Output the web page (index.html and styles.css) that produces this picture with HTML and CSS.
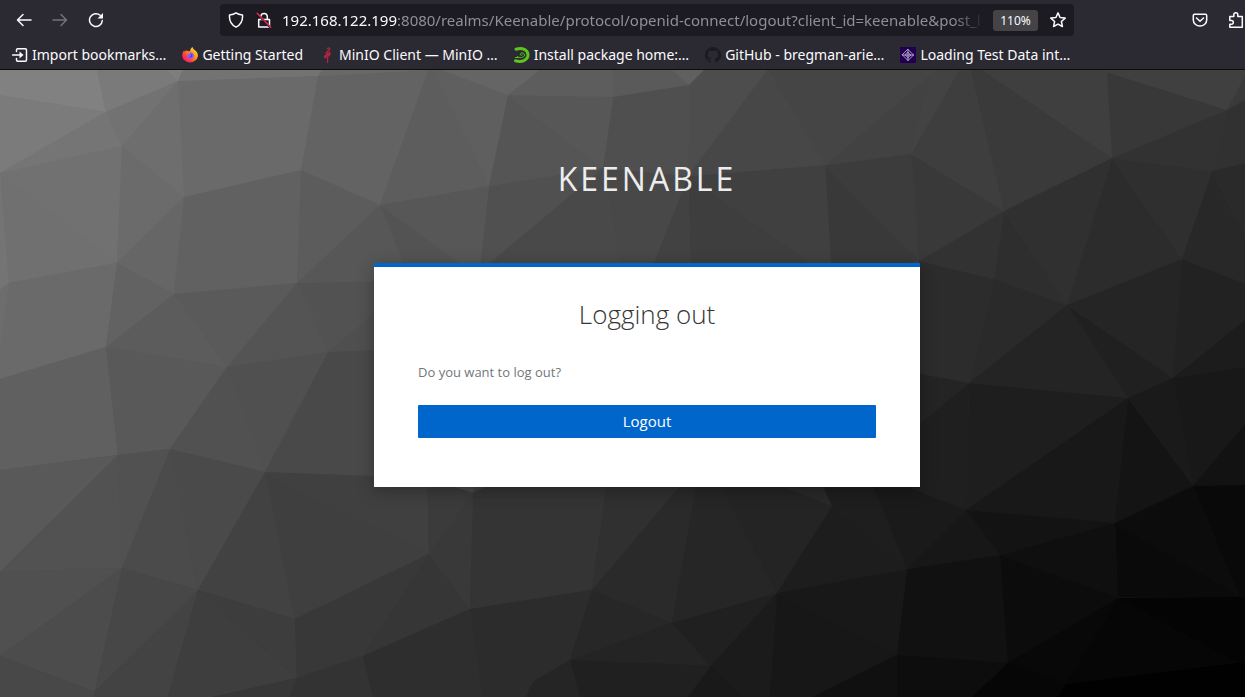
FILE: index.html
```html
<!DOCTYPE html>
<html lang="en">
<head>
<meta charset="utf-8">
<meta name="viewport" content="width=device-width, initial-scale=1">
<title>Logging out</title>
<link rel="stylesheet" href="styles.css">
</head>
<body class="window">
<header class="chrome">
  <div class="toolbar">
    <nav class="history" aria-label="History">
      <button class="icon-button" type="button" aria-label="Back"><svg class="icon" viewBox="0 0 16 16"><path d="M15 8H1.500M7 2.500L1.500 8 7 13.500"/></svg></button>
      <button class="icon-button" type="button" aria-label="Forward" disabled><svg class="icon" viewBox="0 0 16 16"><path d="M1 8h13.500M9 2.500L14.500 8 9 13.500"/></svg></button>
      <button class="icon-button" type="button" aria-label="Reload"><svg class="icon" viewBox="0 0 16 16"><path d="M14.300 8.500A6.400 6.400 0 1 1 12.200 3.300"/><path class="solid" d="M15 1v5.500H9.500z"/></svg></button>
    </nav>
    <div class="address">
      <button class="address-button" type="button" aria-label="Tracking protection"><svg class="icon" viewBox="0 0 16 16"><path d="M8 .8C9.800 2 12 2.600 14.500 3c.4 5-1.700 9.700-6.500 12.200C3.200 12.700 1.100 8 1.500 3 4 2.600 6.200 2 8 .8z"/></svg></button>
      <button class="address-button" type="button" aria-label="Connection not secure"><svg class="icon" viewBox="0 0 16 16"><path d="M4.800 7V4.200a3.300 3.300 0 0 1 6.500 0V7M2.700 7.500h10.800v7.500H2.700z"/><path class="gap" d="M.8 1.500l13.500 14"/><path class="slash" d="M1.200 1.200l13.500 14"/></svg></button>
      <div class="url" role="textbox" aria-label="Address" tabindex="0"><span class="host">192.168.122.199</span>:8080/realms/Keenable/protocol/openid-connect/logout?client_id=keenable&amp;post_l</div>
      <button class="zoom" type="button">110%</button>
      <button class="address-button" type="button" aria-label="Bookmark this page"><svg class="icon" viewBox="0 0 16 16"><path d="M8 .9l2.100 4.600 5.100.6-3.800 3.400 1 5L8 12.100l-4.400 2.400 1-5L.8 6.100l5.100-.6z"/></svg></button>
    </div>
    <div class="tools">
      <button class="icon-button" type="button" aria-label="Save to Pocket"><svg class="icon" viewBox="0 0 16 16"><path d="M2.500 2.300h11c.7 0 1.200.5 1.200 1.200V8A6.700 6 0 0 1 1.300 8V3.500c0-.7.500-1.200 1.200-1.200zM4.500 6L8 9.300 11.500 6"/></svg></button>
      <button class="icon-button" type="button" aria-label="Extensions"><svg class="icon" viewBox="0 0 16 16"><path d="M1.800 7V4.500h4V2.800a2 2 0 0 1 4 0v1.700h4.500v10.700H1.800v-3h1.700a1.800 1.800 0 0 0 0-3.600H1.800z"/></svg></button>
    </div>
  </div>
  <nav class="bookmarks" aria-label="Bookmarks">
    <a class="bookmark" href="#"><svg class="icon" viewBox="0 0 16 16"><path d="M4.500 4.500V3c0-.7.500-1.200 1.200-1.200h7.600c.7 0 1.200.5 1.200 1.200v10c0 .7-.5 1.200-1.200 1.200H5.700c-.7 0-1.200-.5-1.200-1.200v-1.500M.5 8h8"/><path class="solid" d="M7.500 4.500L11.500 8l-4 3.500z"/></svg><span class="label">Import bookmarks…</span></a>
    <a class="bookmark" href="#"><svg class="icon art" viewBox="0 0 16 16"><defs><linearGradient id="flame" x1="1" y1="0" x2="0" y2="1"><stop offset="0" stop-color="#fff44f"/><stop offset=".4" stop-color="#ff980e"/><stop offset=".7" stop-color="#ff3647"/><stop offset="1" stop-color="#e31587"/></linearGradient></defs><path fill="url(#flame)" d="M10.500 0c.3 1.600 1.600 2.300 2.800 3.500C14.800 4.800 16 6.500 15.900 9A7.900 7.300 0 0 1 .2 9C0 6.700 1 4.700 2.300 3.200l.4 1.700c.8-.9 1.500-1.200 2.200-1.300C5.600 4.300 7 4.300 8 4.200 8.300 2.300 9 .8 10.500 0z"/><path fill="#9059ff" d="M8.300 5.200c2.300 0 3.800 1.700 3.700 3.700A3.900 3.800 0 0 1 4.500 9.500c.8.900 2.300.5 3.300-.3H6.300c-1-.2-1.400-1-.8-1.800.8-.3 1.900-.7 2.800-2.200z"/><path fill="#5b35cf" d="M8.500 6.500c1.700.2 2.300 1.800 1.500 3-.9 1.200-2.500 1.200-3.500.6 2-.2 3.400-1.700 2-3.600z"/></svg><span class="label">Getting Started</span></a>
    <a class="bookmark" href="#"><svg class="icon art" viewBox="0 0 16 16"><path fill="none" stroke="#b3233e" stroke-width="1.300" d="M8.500 1.500c1.300-1.200 2.800.3 1.800 1.500L7.500 5.600c-.8 1 .3 1.800 1.200 1.500L8.500 15.500M11 5.500c.3 2-1 3.500-2.300 3.500L6 10.700"/><path fill="#b3233e" d="M5 9l3.800-3.500 2-.5c.4 2-.8 3.600-2.300 4L4.800 11z"/></svg><span class="label">MinIO Client — MinIO …</span></a>
    <a class="bookmark" href="#"><svg class="icon art" viewBox="0 0 16 16"><path fill="none" stroke="#5dc51b" stroke-width="3" d="M2 2.200c6.500-1.900 11.800.5 12 5.500.1 5.700-6.500 7.800-12.500 6.100"/><path fill="none" stroke="#5dc51b" stroke-width="1" d="M3.500 9.700c1.700 1.500 7 1.200 7-1.700 0-2.500-3.500-2.700-4.100-1-.4 1.400 1.500 1.900 2.100.9M1.500 10.500h2.700"/></svg><span class="label">Install package home:…</span></a>
    <a class="bookmark" href="#"><svg class="icon art" viewBox="0 0 16 16"><path fill="#1b1b1f" d="M8 0a8 8 0 0 0-2.500 15.600c.4.100.5-.2.500-.4V13.700c-2.200.5-2.700-1-2.700-1-.4-.9-.9-1.200-.9-1.200-.7-.5.100-.5.100-.5.800.1 1.200.8 1.200.8.700 1.300 1.900.9 2.300.7.100-.5.300-.9.500-1.100-1.800-.2-3.600-.9-3.600-4 0-.9.300-1.600.8-2.100-.1-.2-.4-1 .1-2.100 0 0 .7-.2 2.200.8a7.600 7.600 0 0 1 4 0c1.500-1 2.200-.8 2.200-.8.4 1.100.2 1.900.1 2.100.5.600.8 1.300.8 2.100 0 3.100-1.900 3.800-3.700 4 .3.200.6.700.6 1.500v2.300c0 .2.100.5.500.4A8 8 0 0 0 8 0z"/></svg><span class="label">GitHub - bregman-arie…</span></a>
    <a class="bookmark" href="#"><svg class="icon art" viewBox="0 0 16 16"><path fill="#210050" d="M0 0h16v16H0z"/><path fill="none" stroke="#d6c8f2" stroke-width=".8" d="M8 2.500L13.500 8 8 13.500 2.500 8zM8 2.500v11M2.500 8h11M8 5.300L10.700 8 8 10.700 5.300 8z"/></svg><span class="label">Loading Test Data int…</span></a>
  </nav>
</header>
<main class="page">
  <svg class="backdrop" viewBox="0 70 1245 627" preserveAspectRatio="xMinYMin slice" aria-hidden="true">
    <defs><linearGradient id="shade" x1="0" y1="0" x2="1" y2="1"><stop offset="0" stop-color="#828282"/><stop offset=".5" stop-color="#434343"/><stop offset="1" stop-color="#010101"/></linearGradient></defs>
    <path fill="url(#shade)" d="M0 70h1245v627H0z"/>
    <path fill="#818181" d="M0 70H97L106 112 0 95z"/>
    <path fill="#7a7a7a" d="M97 70H166L178 81 106 112z"/>
    <path fill="#7e7e7e" d="M166 70H183L178 81z"/>
    <path fill="#7b7b7b" d="M0 95L106 112 0 173z"/>
    <path fill="#737373" d="M183 70H322L318 76 178 81z"/>
    <path fill="#757575" d="M0 173L106 112 122 146z"/>
    <path fill="#727272" d="M106 112L178 81 122 146z"/>
    <path fill="#6e6e6e" d="M178 81L184 197 122 146z"/>
    <path fill="#6a6a6a" d="M178 81L318 76 301 170 184 197z"/>
    <path fill="#696969" d="M322 70H428L318 76z"/>
    <path fill="#636363" d="M318 76L428 70 380 205 301 170z"/>
    <path fill="#717171" d="M0 173L122 146 117 263z"/>
    <path fill="#707070" d="M0 173L117 263 9 283z"/>
    <path fill="#747474" d="M0 173L9 283 0 290z"/>
    <path fill="#6b6b6b" d="M122 146L184 197 117 263z"/>
    <path fill="#666666" d="M184 197L174 294 117 263z"/>
    <path fill="#616161" d="M184 197L301 170 297 283 174 294z"/>
    <path fill="#5c5c5c" d="M301 170L380 205 297 283z"/>
    <path fill="#6a6a6a" d="M9 283L117 263 106 347 0 379V345z"/>
    <path fill="#6d6d6d" d="M0 290L9 283 0 348z"/>
    <path fill="#626262" d="M117 263L174 294 106 347z"/>
    <path fill="#5c5c5c" d="M174 294L227 367 106 347z"/>
    <path fill="#5a5a5a" d="M174 294L297 283 227 367z"/>
    <path fill="#545454" d="M297 283L328 352 227 367z"/>
    <path fill="#525252" d="M297 283L479 278 328 352z"/>
    <path fill="#575757" d="M380 205L297 283 410 281z"/>
    <path fill="#4f4f4f" d="M328 352L400 292V350z"/>
    <path fill="#606060" d="M0 379L106 347 118 455 0 470z"/>
    <path fill="#595959" d="M106 347L227 367 170 449 118 455z"/>
    <path fill="#515151" d="M227 367L265 472 170 449z"/>
    <path fill="#505050" d="M227 367L328 352 265 472z"/>
    <path fill="#494949" d="M328 352L500 346 473 493 265 472z"/>
    <path fill="#595959" d="M0 470L118 455 0 572z"/>
    <path fill="#525252" d="M118 455L122 568 0 572z"/>
    <path fill="#515151" d="M118 455L170 449 122 568z"/>
    <path fill="#4b4b4b" d="M170 449L198 590 122 568z"/>
    <path fill="#4a4a4a" d="M170 449L265 472 198 590z"/>
    <path fill="#424242" d="M265 472L295 619 198 590z"/>
    <path fill="#3f3f3f" d="M265 472L429 554 295 619z"/>
    <path fill="#404040" d="M265 472L427 478 429 554z"/>
    <path fill="#505050" d="M0 572L122 568 0 656z"/>
    <path fill="#4c4c4c" d="M122 568L95 692 0 656z"/>
    <path fill="#474747" d="M122 568L198 590 95 692z"/>
    <path fill="#484848" d="M0 656L95 692 93 697H0z"/>
    <path fill="#434343" d="M198 590L168 697H93L95 692z"/>
    <path fill="#3e3e3e" d="M198 590L297 678 212 697H168z"/>
    <path fill="#3d3d3d" d="M198 590L295 619 297 678z"/>
    <path fill="#383838" d="M295 619L429 554 363 656 297 678z"/>
    <path fill="#373737" d="M212 697L297 678 290 697z"/>
    <path fill="#333333" d="M297 678L363 656 373 697H290z"/>
    <path fill="#363636" d="M429 554L470 609 363 656z"/>
    <path fill="#2e2e2e" d="M363 656L470 609 483 697H373z"/>
    <path fill="#3b3b3b" d="M427 478L473 493 429 554z"/>
    <path fill="#393939" d="M473 493L470 609 429 554z"/>
    <path fill="#5d5d5d" d="M428 70L440 70 489 186 380 205z"/>
    <path fill="#5f5f5f" d="M433 70H442L508 95 489 186z"/>
    <path fill="#656565" d="M442 70H540L508 95z"/>
    <path fill="#5d5d5d" d="M540 70H613V97L508 95z"/>
    <path fill="#5a5a5a" d="M613 70H672L689 85 613 97z"/>
    <path fill="#606060" d="M672 70H704L689 85z"/>
    <path fill="#555555" d="M508 95L603 168 489 186z"/>
    <path fill="#575757" d="M508 95L613 97 603 168z"/>
    <path fill="#4f4f4f" d="M613 97L689 85 688 176 603 168z"/>
    <path fill="#4d4d4d" d="M704 70H767L688 176 689 85z"/>
    <path fill="#474747" d="M767 70L825 165 688 176z"/>
    <path fill="#454545" d="M767 70H933V72L825 165z"/>
    <path fill="#535353" d="M380 205L460 263 410 281z"/>
    <path fill="#575757" d="M380 205L489 186 479 278 460 263z"/>
    <path fill="#505050" d="M489 186L603 168 479 278z"/>
    <path fill="#494949" d="M603 168L622 278H472z"/>
    <path fill="#484848" d="M603 168L688 176 648 278H622z"/>
    <path fill="#424242" d="M688 176L691 278H648z"/>
    <path fill="#3e3e3e" d="M688 176L832 278H691z"/>
    <path fill="#404040" d="M688 176L825 165 832 278z"/>
    <path fill="#343434" d="M473 493L500 480 607 480 592 590 470 609z"/>
    <path fill="#303030" d="M607 480H685L592 590z"/>
    <path fill="#2a2a2a" d="M685 480H697L672 623 592 590z"/>
    <path fill="#262626" d="M697 480H717L777 593 672 623z"/>
    <path fill="#2c2c2c" d="M470 609L592 590 570 660 533 682 526 697H483z"/>
    <path fill="#272727" d="M592 590L672 623 570 660z"/>
    <path fill="#242424" d="M672 623L711 666 570 660z"/>
    <path fill="#252525" d="M570 660L580 697H526L533 682z"/>
    <path fill="#202020" d="M570 660L711 666 688 697H580z"/>
    <path fill="#202020" d="M672 623L777 593 711 666z"/>
    <path fill="#191919" d="M711 666L742 697H688z"/>
    <path fill="#1b1b1b" d="M777 593L770 697H742L711 666z"/>
    <path fill="#242424" d="M717 480H765L832 506 777 593z"/>
    <path fill="#292929" d="M765 480H820L832 506z"/>
    <path fill="#1e1e1e" d="M820 480H870L907 569 832 506z"/>
    <path fill="#1d1d1d" d="M832 506L907 569 777 593z"/>
    <path fill="#171717" d="M777 593L897 655 812 697H770z"/>
    <path fill="#181818" d="M777 593L907 569 897 655z"/>
    <path fill="#424242" d="M933 72L911 154 825 165z"/>
    <path fill="#434343" d="M933 70H959L911 154 933 72z"/>
    <path fill="#3e3e3e" d="M959 70H970L1004 211 911 154z"/>
    <path fill="#3a3a3a" d="M970 70H983L1112 158 1004 211z"/>
    <path fill="#3f3f3f" d="M983 70H1107L1112 158z"/>
    <path fill="#383838" d="M1107 72L1227 110 1112 158z"/>
    <path fill="#404040" d="M1107 70H1245V76L1227 110 1107 72z"/>
    <path fill="#3a3a3a" d="M1245 76V100L1227 110z"/>
    <path fill="#313131" d="M1227 110L1245 100V163L1212 171z"/>
    <path fill="#323232" d="M1227 110L1212 171 1112 158z"/>
    <path fill="#3c3c3c" d="M825 165L911 154 919 261z"/>
    <path fill="#393939" d="M825 165L919 261 832 278z"/>
    <path fill="#393939" d="M911 154L1004 211 919 261z"/>
    <path fill="#323232" d="M1004 211L994 279 919 261z"/>
    <path fill="#2e2e2e" d="M1004 211L1067 305 994 279z"/>
    <path fill="#303030" d="M1004 211L1112 158 1067 305z"/>
    <path fill="#2c2c2c" d="M1112 158L1182 259 1067 305z"/>
    <path fill="#2f2f2f" d="M1112 158L1212 171 1182 259z"/>
    <path fill="#282828" d="M1212 171L1245 235V284L1182 259z"/>
    <path fill="#2a2a2a" d="M1212 171L1245 163V235z"/>
    <path fill="#2c2c2c" d="M919 261L994 279 969 383 900 370z"/>
    <path fill="#2a2a2a" d="M994 279L1067 305 969 383z"/>
    <path fill="#242424" d="M1067 305L1128 398 969 383z"/>
    <path fill="#202020" d="M1067 305L1173 378 1128 398z"/>
    <path fill="#252525" d="M1067 305L1182 259 1173 378z"/>
    <path fill="#222222" d="M1182 259L1245 284V320L1173 378z"/>
    <path fill="#1c1c1c" d="M1245 320V367L1173 378z"/>
    <path fill="#181818" d="M1173 378L1245 367V424L1193 486z"/>
    <path fill="#242424" d="M900 370L969 383 900 440z"/>
    <path fill="#1f1f1f" d="M969 383L966 510 890 480 900 440z"/>
    <path fill="#1e1e1e" d="M969 383L1128 398 966 510z"/>
    <path fill="#181818" d="M1128 398L1115 523 966 510z"/>
    <path fill="#141414" d="M1128 398L1193 486 1115 523z"/>
    <path fill="#1a1a1a" d="M1128 398L1173 378 1193 486z"/>
    <path fill="#121212" d="M1245 424V485L1193 486z"/>
    <path fill="#090909" d="M1193 486L1245 485V597H1240z"/>
    <path fill="#0c0c0c" d="M1193 486L1240 597 1115 523z"/>
    <path fill="#0a0a0a" d="M1115 523L1240 597H1118z"/>
    <path fill="#1a1a1a" d="M870 480H890L966 510 907 569z"/>
    <path fill="#171717" d="M966 510L1000 555 907 569z"/>
    <path fill="#131313" d="M966 510L1115 523 1000 555z"/>
    <path fill="#0f0f0f" d="M1115 523L1118 598 1000 555z"/>
    <path fill="#111111" d="M907 569L1000 555 1008 663 897 655z"/>
    <path fill="#0c0c0c" d="M1000 555L1118 598 1008 663z"/>
    <path fill="#080808" d="M1118 598L1066 684 1008 663z"/>
    <path fill="#060606" d="M1118 598L1239 663 1066 684z"/>
    <path fill="#040404" d="M1118 598L1240 597 1245 597V663H1239z"/>
    <path fill="#101010" d="M897 655V697H812z"/>
    <path fill="#0d0d0d" d="M897 655L1008 663 972 697H897z"/>
    <path fill="#060606" d="M1008 663L1066 684 1058 697H972z"/>
    <path fill="#010101" d="M1066 684L1239 663H1245V697H1058z"/>
  </svg>
  <h1 class="realm">KEENABLE</h1>
  <section class="card">
    <h2 class="card-title">Logging out</h2>
    <form class="logout-form">
      <p class="question">Do you want to log out?</p>
      <button class="logout" type="button">Logout</button>
    </form>
  </section>
</main>
</body>
</html>
```
FILE: styles.css
```css
* {
  box-sizing: border-box;
}

.window {
  display: flex;
  flex-direction: column;
  min-height: 100vh;
  margin: 0;
  overflow-x: hidden;
  background: #010101;
  font-family: "Open Sans", sans-serif;
}

button {
  padding: 0;
  border: 0;
  background: none;
  color: inherit;
  font: inherit;
}

.chrome {
  border-bottom: 1px solid #0c0c0d;
  background: #2b2a33;
  color: #fbfbfe;
  font-family: "Noto Sans", sans-serif;
}

.toolbar {
  display: flex;
  align-items: center;
  height: 40px;
}

.history {
  display: flex;
  flex: none;
  width: 220px;
  padding-left: 6px;
}

.icon-button {
  display: flex;
  flex: none;
  align-items: center;
  justify-content: center;
  width: 36px;
  height: 32px;
}

.icon-button:disabled {
  color: #74737a;
}

.icon {
  flex: none;
  width: 16px;
  height: 16px;
  fill: none;
  stroke: currentColor;
  stroke-width: 1.5;
  stroke-linecap: round;
  stroke-linejoin: round;
}

.art {
  stroke: none;
}

.solid {
  fill: currentColor;
  stroke: none;
}

.gap {
  stroke: #1c1b22;
  stroke-width: 2;
}

.slash {
  stroke: #e22850;
}

.address {
  display: flex;
  flex: 1;
  align-items: center;
  min-width: 0;
  height: 32px;
  padding: 0 2px;
  border-radius: 4px;
  background: #1c1b22;
}

.address-button {
  display: flex;
  flex: none;
  align-items: center;
  justify-content: center;
  width: 28px;
  height: 28px;
}

.url {
  flex: 1;
  min-width: 0;
  margin: 0 8px 0 4px;
  overflow: hidden;
  color: #8f8f97;
  font-size: 15px;
  line-height: 24px;
  white-space: nowrap;
  mask-image: linear-gradient(to left, transparent, #000 32px);
}

.host {
  color: #fbfbfe;
}

.zoom {
  flex: none;
  width: 45px;
  height: 21px;
  margin-right: 6px;
  border-radius: 3px;
  background: #434348;
  font-size: 12px;
  line-height: 21px;
}

.tools {
  display: flex;
  flex: none;
  justify-content: flex-end;
  width: 180px;
  margin-right: -9px;
}

.bookmarks {
  display: flex;
  align-items: center;
  gap: 16px;
  height: 29px;
  padding-left: 12px;
}

.bookmark {
  display: flex;
  flex: none;
  align-items: center;
  gap: 4px;
  color: inherit;
  text-decoration: none;
}

.label {
  font-size: 14px;
  line-height: 20px;
}

.page {
  position: relative;
  display: flex;
  flex: 1;
  flex-direction: column;
  align-items: center;
  padding: 84px 0 40px 49px;
  overflow: hidden;
}

.backdrop {
  position: absolute;
  inset: 0;
  width: 100%;
  height: 100%;
}

.realm {
  position: relative;
  margin: 0 0 60px;
  color: #ededed;
  font-size: 32px;
  font-weight: 400;
  line-height: 49px;
  letter-spacing: 3px;
}

.card {
  position: relative;
  width: 100%;
  max-width: 546px;
  padding: 27px 44px 49px;
  border-top: 4px solid #06c;
  background: #fff;
  box-shadow: 0 4px 16px rgba(3, 3, 3, 0.3);
}

.card-title {
  margin: 0 0 28px;
  color: #363636;
  font-size: 26px;
  font-weight: 300;
  line-height: 40px;
  text-align: center;
}

.question {
  margin: 0 0 23px;
  color: #72767b;
  font-size: 13px;
  line-height: 20px;
}

.logout {
  display: block;
  width: 100%;
  height: 33px;
  border-radius: 1px;
  background: #06c;
  color: #fff;
  font-size: 15px;
  line-height: 33px;
}
```
